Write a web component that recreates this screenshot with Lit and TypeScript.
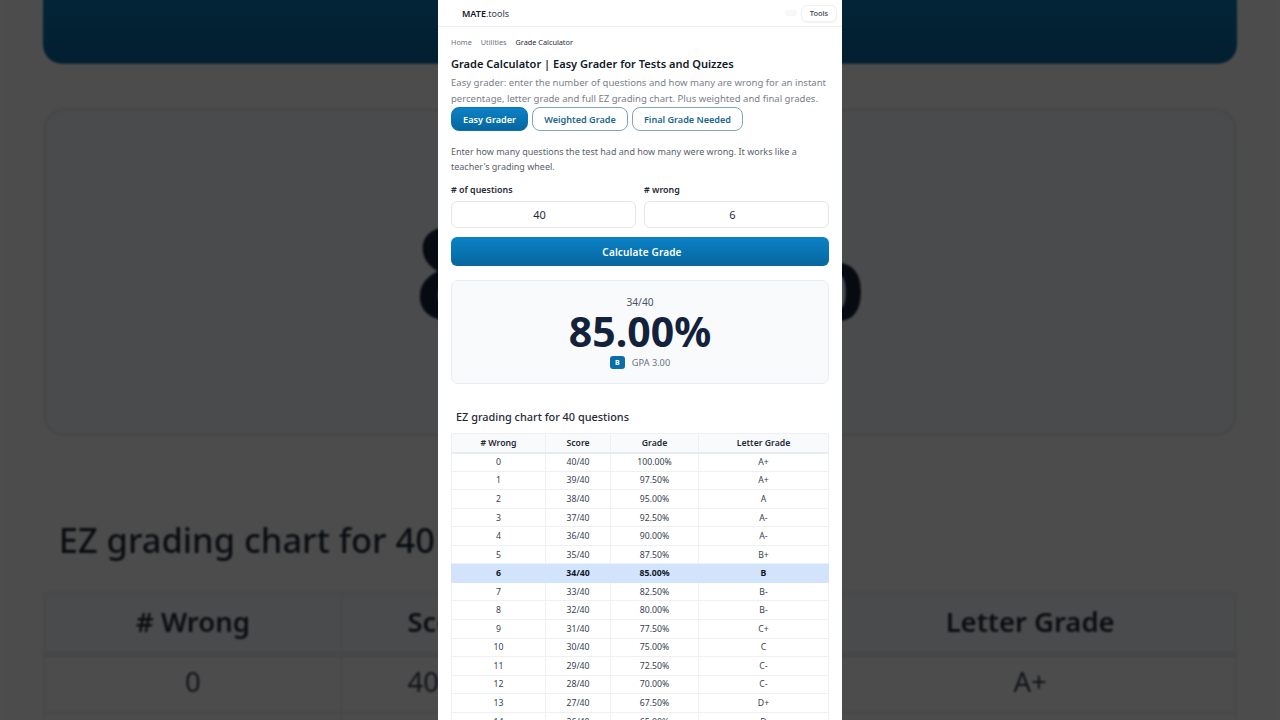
import { LitElement, html, css } from "lit";
import { customElement } from "lit/decorators.js";

const LETTERS = ["A+","A+","A","A-","A-","B+","B","B-","B-","C+","C","C-","C-","D+","D","D-"];
const TOTAL = 40;
const WRONG = 6;

@customElement("app-root")
export class AppRoot extends LitElement {
  static styles = css`
    :host { display: block; width: 1280px; height: 720px; overflow: hidden; background: #4d4d4d; font-family: "Noto Sans", "Open Sans", sans-serif; color: #111827; }
    * { box-sizing: border-box; }
    .stage { position: relative; width: 1280px; height: 720px; overflow: hidden; display: flex; justify-content: center; }
    .backdrop { position: absolute; left: 438px; top: 0; transform-origin: 202px 0; transform: translateY(-776.5px) scale(3.159); filter: blur(0.35px) brightness(0.3); }
    .column { position: relative; width: 404px; height: 720px; background: #fff; overflow: hidden; flex: none; }
    .topbar { height: 27px; border-bottom: 1px solid #eceff2; display: flex; align-items: center; justify-content: space-between; padding: 0 5px 0 24px; }
    .logo { font-size: 9px; color: #374151; }
    .logo b { font-weight: 600; color: #111827; }
    .actions { display: flex; align-items: center; gap: 4px; }
    .toggle { width: 12px; height: 6px; border-radius: 3px; background: #f6f7f8; }
    .tools { height: 17px; width: 36px; border-radius: 6px; border: 1px solid #eef0f3; box-shadow: 0 1px 2px rgba(0,0,0,.06); font-size: 7.5px; font-weight: 500; color: #374151; display: flex; align-items: center; justify-content: center; }
    .main { padding: 9px 13px 0; }
    .crumbs { display: flex; gap: 9px; font-size: 7.3px; line-height: 12px; color: #6b7280; }
    .crumbs .cur { color: #1f2937; }
    h1 { margin: 6.5px 0 0; font-size: 11.05px; line-height: 18px; font-weight: 600; color: #111827; }
    .lead { margin: 2.5px 0 0; font-size: 9.55px; line-height: 16px; color: #7a8089; }
    .tabs { display: flex; gap: 4px; margin-top: 0; }
    .tab { height: 24px; border-radius: 8px; border: 1px solid #7fa6bd; color: #1b668f; font-size: 9.1px; font-weight: 600; display: flex; align-items: center; justify-content: center; background: #fff; }
    .tab.easy { width: 77px; background: linear-gradient(#0b82c6, #07669f); border-color: #0a74b3; color: #fff; }
    .tab.weighted { width: 96px; }
    .tab.final { width: 111px; }
    .intro { margin: 12.5px 0 0; font-size: 9px; line-height: 15.3px; color: #5b626c; }
    .fields { display: grid; grid-template-columns: 185px 185px; gap: 8px; margin-top: 10px; }
    label { display: block; font-size: 8.9px; line-height: 12px; font-weight: 600; color: #1f2937; }
    .value { display: block; width: 100%; height: 27px; margin-top: 5px; padding: 0 8px 0 0; border: 1px solid #e4e7eb; border-radius: 6px; background: #fff; text-align: center; font-family: "Noto Sans", sans-serif; font-size: 11px; line-height: 25px; color: #1f2937; }
    .calc { height: 29px; margin-top: 9px; padding-left: 4px; border-radius: 6px; background: linear-gradient(#0b82c6, #07669f); color: #fff; font-size: 10px; font-weight: 600; display: flex; align-items: center; justify-content: center; letter-spacing: .15px; }
    .result { height: 104px; margin-top: 14px; border: 1px solid #e9edf1; border-radius: 7px; background: #f8fafc; display: flex; flex-direction: column; align-items: center; padding-top: 15px; }
    .frac { font-size: 10.2px; line-height: 13px; color: #4b5563; }
    .pct { font-size: 41px; line-height: 44px; font-weight: 700; color: #14213a; }
    .gpa { display: flex; align-items: center; gap: 7px; font-size: 9.2px; line-height: 13px; color: #6b7280; margin-top: 3px; }
    .badge { width: 15px; height: 13px; border-radius: 3px; background: #0b6ea8; color: #fff; font-size: 7px; font-weight: 700; display: flex; align-items: center; justify-content: center; }
    h2 { margin: 25px 0 0 5px; font-size: 10.9px; line-height: 16px; font-weight: 500; color: #1f2937; }
    table { width: 377px; margin: 8px 0 0 0; table-layout: fixed; border-collapse: collapse; font-size: 8.7px; color: #374151; }
    th, td { border: 1px solid #eef0f3; padding: 0; text-align: center; }
    th { height: 19px; background: #f8fafc; font-weight: 600; color: #1f2937; border-bottom: 2px solid #e8ebef; }
    td { height: 18.55px; }
    tr.hit td { background: #d2e4fc; font-weight: 700; color: #111827; border-color: #d2e4fc; }
  `;

  private page() {
    return html`
      <div class="topbar">
        <div class="logo"><b>MATE</b>.tools</div>
        <div class="actions"><span class="toggle"></span><span class="tools">Tools</span></div>
      </div>
      <div class="main">
        <div class="crumbs"><span>Home</span><span>Utilities</span><span class="cur">Grade Calculator</span></div>
        <h1>Grade Calculator | Easy Grader for Tests and Quizzes</h1>
        <p class="lead">Easy grader: enter the number of questions and how many are wrong for an instant percentage, letter grade and full EZ grading chart. Plus weighted and final grades.</p>
        <div class="tabs">
          <div class="tab easy">Easy Grader</div>
          <div class="tab weighted">Weighted Grade</div>
          <div class="tab final">Final Grade Needed</div>
        </div>
        <p class="intro">Enter how many questions the test had and how many were wrong. It works like a teacher's grading wheel.</p>
        <div class="fields">
          <div><label># of questions</label><div class="value">40</div></div>
          <div><label># wrong</label><div class="value">6</div></div>
        </div>
        <div class="calc">Calculate Grade</div>
        <div class="result">
          <div class="frac">34/40</div>
          <div class="pct">85.00%</div>
          <div class="gpa"><span class="badge">B</span><span>GPA 3.00</span></div>
        </div>
        <h2>EZ grading chart for 40 questions</h2>
        <table>
          <colgroup><col style="width:94px"><col style="width:65px"><col style="width:88px"><col style="width:130px"></colgroup>
          <thead><tr><th># Wrong</th><th>Score</th><th>Grade</th><th>Letter Grade</th></tr></thead>
          <tbody>
            ${LETTERS.map((l, i) => html`
              <tr class=${i === WRONG ? "hit" : ""}>
                <td>${i}</td><td>${TOTAL - i}/${TOTAL}</td><td>${(((TOTAL - i) / TOTAL) * 100).toFixed(2)}%</td><td>${l}</td>
              </tr>`)}
          </tbody>
        </table>
      </div>
    `;
  }

  render() {
    return html`
      <div class="stage">
        <div class="backdrop"><div class="column">${this.page()}</div></div>
        <div class="column">${this.page()}</div>
      </div>
    `;
  }
}
